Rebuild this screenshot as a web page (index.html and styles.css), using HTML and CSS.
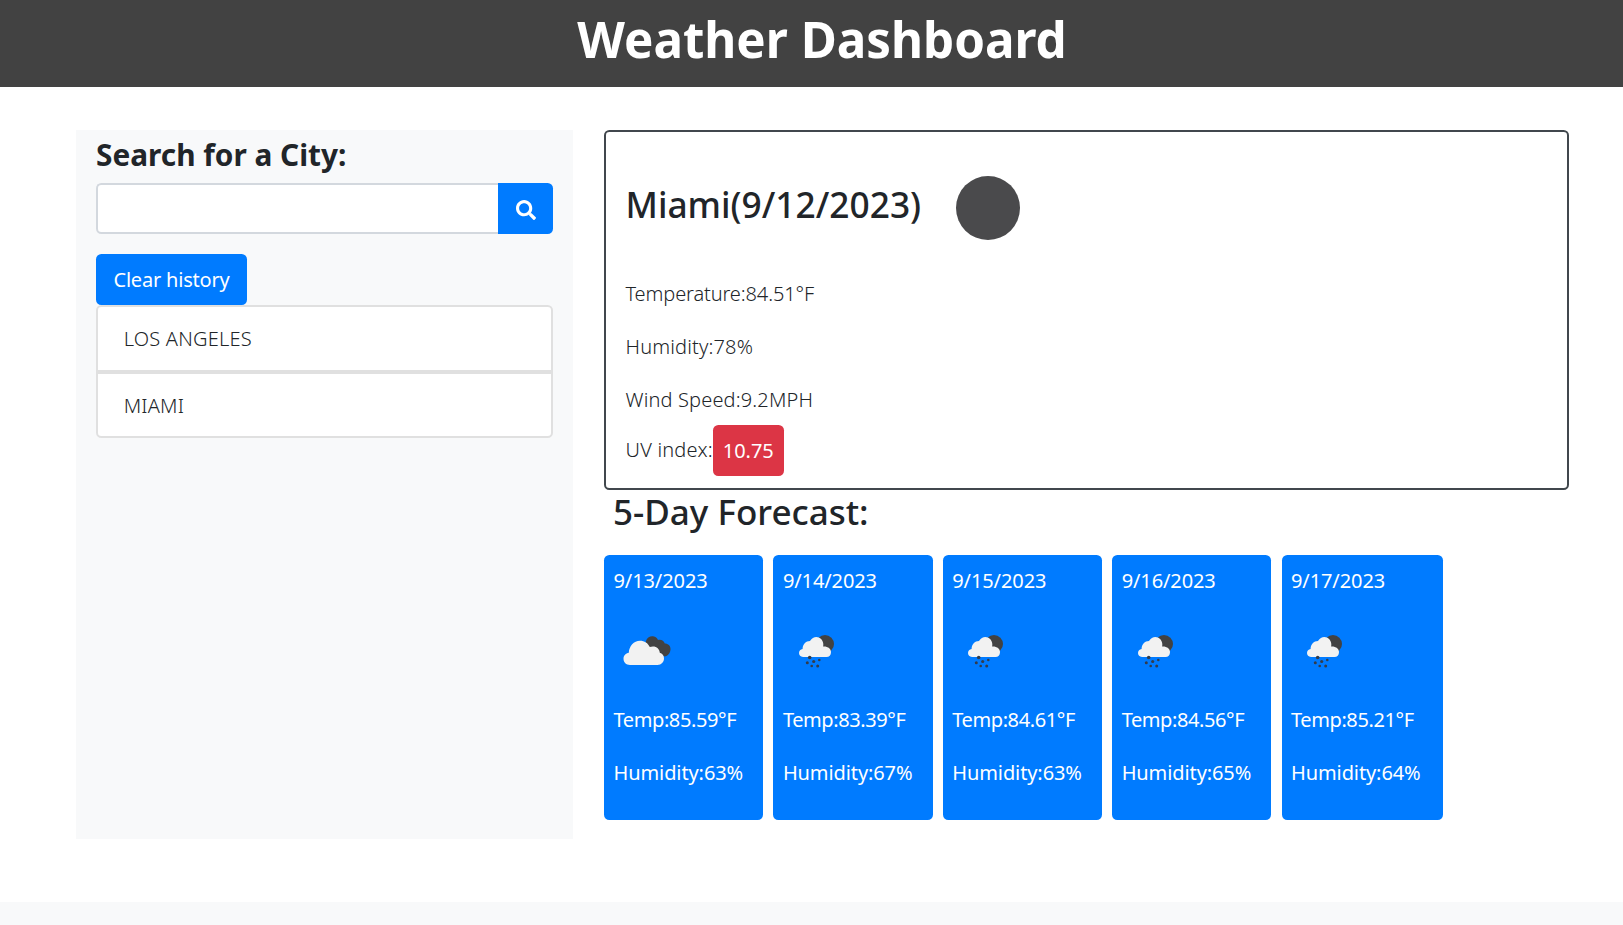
FILE: index.html
```html
<!DOCTYPE html>
<html lang="en">
<head>
  <meta charset="UTF-8">
  <meta name="viewport" content="width=device-width, initial-scale=1.0">
  <title>Weather Dashboard</title>
  <link rel="stylesheet" href="styles.css">
</head>
<body>
  <svg class="defs" width="0" height="0">
    <symbol id="rain" viewBox="0 0 64 64">
      <circle cx="42" cy="26" r="9" fill="#424242"/>
      <path d="M20 39c-2.500 0-4-1.700-4-3.900 0-2.300 1.500-3.900 3.600-4.200 0-4.600 3.200-7.900 7.400-7.900 1.700-2.700 4-4 6.300-4 3.800 0 6.700 3 7 6.900 0 1 0 1.800-.2 2.600 4.700-.3 7.900 2 7.900 5.700 0 2.800-1.800 4.800-4.500 4.800z" fill="#f2f2f2"/>
      <g fill="#333c4a">
        <circle cx="26.700" cy="39.500" r="1.800"/>
        <circle cx="24.300" cy="44.700" r="1.500"/>
        <circle cx="30.700" cy="43.500" r="1.600"/>
        <circle cx="36.300" cy="42" r="1.300"/>
        <circle cx="28.700" cy="48" r="1.300"/>
        <circle cx="34.700" cy="48" r="1.500"/>
      </g>
    </symbol>
  </svg>

  <header class="topbar">
    <h1>Weather Dashboard</h1>
  </header>

  <main class="layout">
    <aside class="sidebar">
      <h4>Search for a City:</h4>
      <div class="search">
        <input type="text" class="search-input">
        <button class="search-btn" type="button">
          <svg width="20" height="20" viewBox="0 0 512 512"><path fill="#fff" d="M505 442.700L405.300 343c-4.500-4.500-10.600-7-17-7H372c27.600-35.300 44-79.700 44-128C416 93.100 322.900 0 208 0S0 93.100 0 208s93.100 208 208 208c48.300 0 92.700-16.400 128-44v16.300c0 6.400 2.500 12.500 7 17l99.700 99.700c9.400 9.400 24.600 9.400 33.900 0l28.300-28.300c9.400-9.400 9.400-24.600.1-34zM208 336c-70.700 0-128-57.200-128-128 0-70.700 57.200-128 128-128 70.700 0 128 57.200 128 128 0 70.700-57.200 128-128 128z"/></svg>
        </button>
      </div>
      <button class="btn-clear" type="button">Clear history</button>
      <ul class="history">
        <li>LOS ANGELES</li>
        <li>MIAMI</li>
      </ul>
    </aside>

    <section class="content">
      <div class="current">
        <div class="current-head">
          <h3>Miami(9/12/2023)</h3>
          <div class="moon"></div>
        </div>
        <p class="temp">Temperature:84.51°F</p>
        <p>Humidity:78%</p>
        <p class="wind">Wind Speed:9.2MPH</p>
        <div class="uv">UV index:<span class="uv-badge">10.75</span></div>
      </div>

      <h3 class="forecast-title">5-Day Forecast:</h3>
      <div class="forecast">
        <div class="day">
          <p>9/13/2023</p>
          <svg class="day-icon" viewBox="0 0 64 64">
            <path d="M34 30c-2-1.500-3-4-2-7 1-3.500 4.500-5.500 8-4.500 2 .6 3.300 1.800 4 3.400 3-.9 6 .8 6.800 3.600 3.300 0 5.700 2.300 5.700 5.400 0 3.700-2.500 7.100-6 7.600z" fill="#424242"/>
            <path d="M16 47c-3.800 0-6.500-2.600-6.500-6.200 0-3.200 2.300-5.600 5.300-6 .3-6.500 5-12 11.200-12 4.500 0 8 2.300 9.800 6.300 1-.5 2-.7 3.200-.7 3.800 0 6.500 2.600 6.800 6.400 2.500.5 4.200 2.700 4.200 5.500 0 3.800-2.700 6.700-6.500 6.700z" fill="#f2f2f2"/>
          </svg>
          <p class="temp">Temp:85.59°F</p>
          <p>Humidity:63%</p>
        </div>
        <div class="day">
          <p>9/14/2023</p>
          <svg class="day-icon"><use href="#rain"/></svg>
          <p class="temp">Temp:83.39°F</p>
          <p>Humidity:67%</p>
        </div>
        <div class="day">
          <p>9/15/2023</p>
          <svg class="day-icon"><use href="#rain"/></svg>
          <p class="temp">Temp:84.61°F</p>
          <p>Humidity:63%</p>
        </div>
        <div class="day">
          <p>9/16/2023</p>
          <svg class="day-icon"><use href="#rain"/></svg>
          <p class="temp">Temp:84.56°F</p>
          <p>Humidity:65%</p>
        </div>
        <div class="day">
          <p>9/17/2023</p>
          <svg class="day-icon"><use href="#rain"/></svg>
          <p class="temp">Temp:85.21°F</p>
          <p>Humidity:64%</p>
        </div>
      </div>
    </section>
  </main>

  <footer class="footer"></footer>
</body>
</html>
```
FILE: styles.css
```css
* { box-sizing: border-box; }
body { margin: 0; background: #fff; color: #212529; font-family: "Noto Sans", "Open Sans", sans-serif; font-size: 20px; line-height: 32px; }
p { margin: 0 0 21.330px; letter-spacing: -.1px; }
h1, h3, h4 { margin: 0; }
.defs { position: absolute; }
.temp { letter-spacing: -.4px; }

.topbar { height: 87px; background: #424242; color: #fff; text-align: center; padding-left: 21px; }
.topbar h1 { font-size: 49.300px; font-weight: 700; line-height: 78px; }

.layout { display: flex; gap: 31px; padding: 43px 54px 63px 76px; }
.sidebar { width: 497px; height: 709px; flex: none; background: #f8f9fa; padding: 6px 20px 4px; }
.sidebar h4 { font-size: 29.800px; font-weight: 700; line-height: 38.400px; margin-bottom: 8.670px; }

.search { display: flex; height: 51px; margin-bottom: 20px; }
.search-input { flex: 1; min-width: 0; border: 2.670px solid #d3d8de; border-right: none; border-radius: 5.330px 0 0 5.330px; background: #fff; }
.search-btn { width: 55px; border: none; background: #007bff; border-radius: 0 5.330px 5.330px 0; display: flex; align-items: center; justify-content: center; padding: 3px 0 0 1px; }

.btn-clear { display: block; width: 151px; height: 51px; border: none; border-radius: 5.330px; background: #007bff; color: #fff; font: inherit; letter-spacing: -.2px; padding: 0; }

.history { list-style: none; margin: 0; padding: 0; font-weight: 300; letter-spacing: .2px; }
.history li { height: 66.670px; padding: 16px 25.670px; background: #fff; border: 2.670px solid #e0e0e0; }
.history li:first-child { border-radius: 5.330px 5.330px 0 0; }
.history li:last-child { border-radius: 0 0 5.330px 5.330px; }

.content { flex: 1; min-width: 0; }
.current { height: 359.500px; padding: 0 19.500px; border: 2px solid #41474d; border-radius: 5.330px; font-weight: 300; }
.current p { letter-spacing: .15px; }
.current .temp { letter-spacing: -.12px; }
.current-head { display: flex; gap: 34.500px; padding-top: 44px; margin-bottom: 37.500px; }
.current-head h3 { font-size: 35.300px; font-weight: 500; line-height: 44.800px; padding-top: 6px; }
.moon { width: 64px; height: 64px; border-radius: 50%; background: #4a4a4c; }
.wind { margin-bottom: 8.500px; }
.uv { display: flex; align-items: center; letter-spacing: .2px; }
.uv-badge { display: block; width: 71px; height: 51px; line-height: 51px; text-align: center; border-radius: 5.330px; background: #dc3545; color: #fff; font-weight: 400; letter-spacing: 0; }

.forecast-title { font-size: 35px; font-weight: 500; line-height: 44.800px; padding-left: 9px; margin-bottom: 20.500px; }
.forecast { display: flex; gap: 10.200px; }
.day { width: 159.200px; height: 265.500px; padding: 10px 9.500px; border-radius: 5.330px; background: #007bff; color: #fff; }
.day:last-child { width: 161px; }
.day-icon { display: block; width: 64px; height: 64px; margin-bottom: 22px; }

.footer { height: 23px; background: #f8f9fa; }
```
